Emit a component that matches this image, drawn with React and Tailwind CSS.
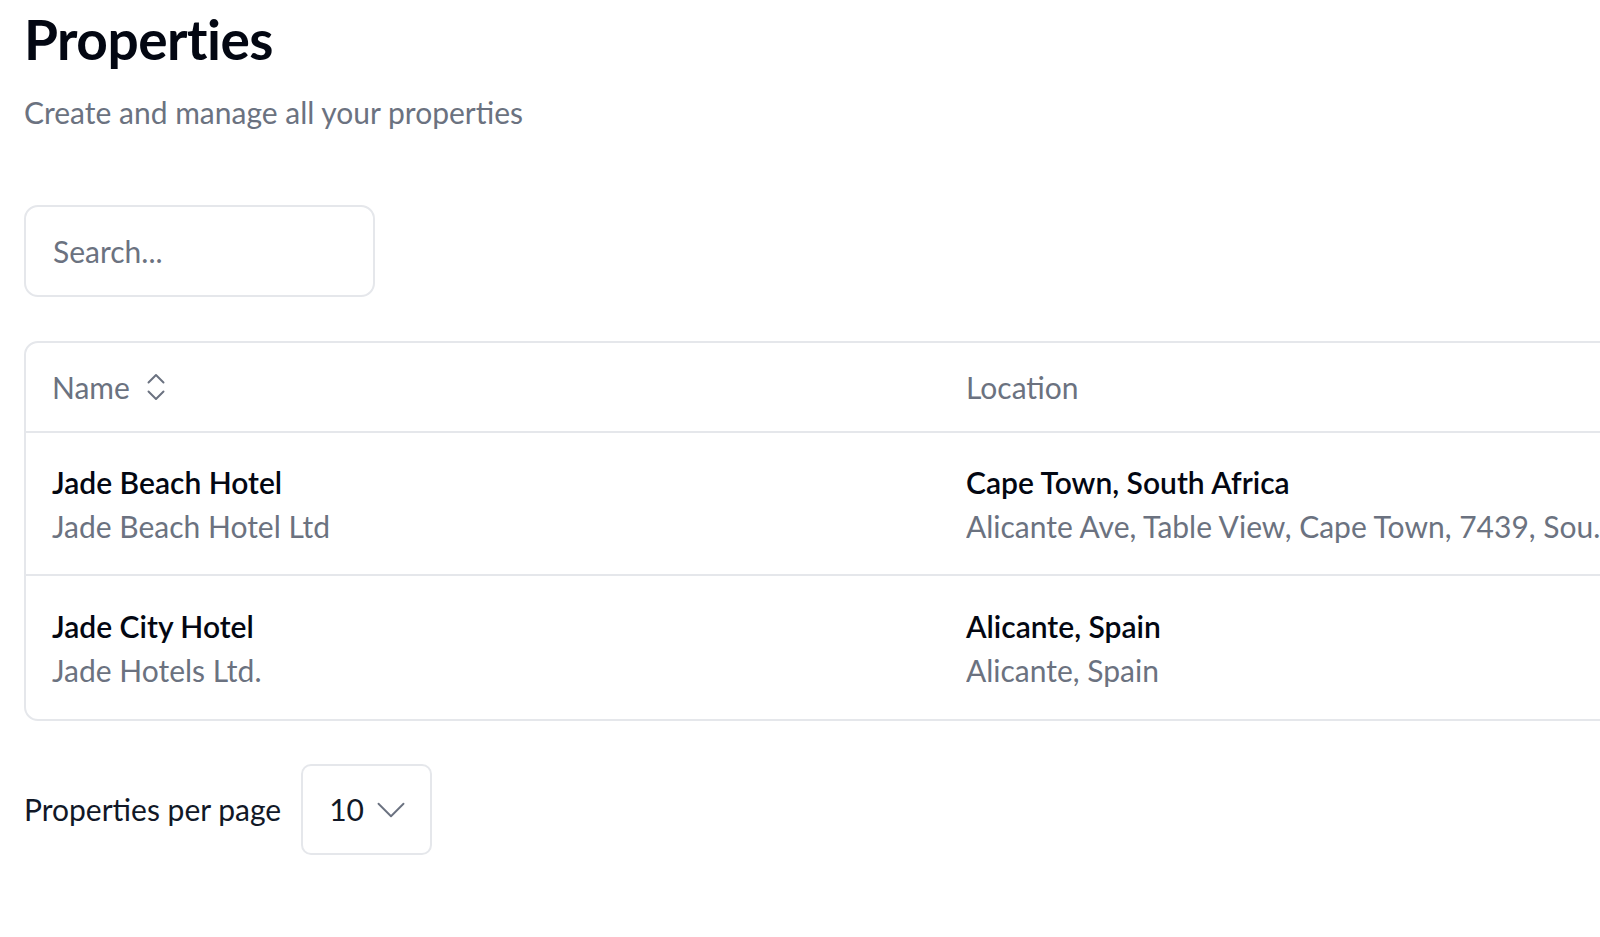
import { ChevronDown, ChevronsUpDown } from "lucide-react";

const rows = [
  {
    name: "Jade Beach Hotel",
    company: "Jade Beach Hotel Ltd",
    city: "Cape Town, South Africa",
    address: "Alicante Ave, Table View, Cape Town, 7439, South Africa",
  },
  {
    name: "Jade City Hotel",
    company: "Jade Hotels Ltd.",
    city: "Alicante, Spain",
    address: "Alicante, Spain",
  },
];

export default function App() {
  return (
    <div
      className="w-[1600px] h-[937px] overflow-hidden bg-white pl-6"
      style={{ fontFamily: "Lato, 'Noto Sans', sans-serif" }}
    >
      {/* Heading */}
      <h1 className="pt-[7px] text-[55px] leading-[64px] font-bold text-[#030712] tracking-[-0.5px]">
        Properties
      </h1>
      <p className="mt-[22px] text-[30px] leading-[38px] text-[#6b7280]">
        Create and manage all your properties
      </p>

      {/* Search */}
      <div className="mt-[74px] w-[351px] h-[92px] rounded-[14px] border-2 border-[#e5e7eb] flex items-center px-[27px]">
        <span className="text-[30px] text-[#6b7280]">Search...</span>
      </div>

      {/* Table */}
      <div className="mt-[44px] w-[2000px] rounded-[14px] border-2 border-[#e5e7eb]">
        <div className="flex h-[90px] items-center border-b-2 border-[#e5e7eb] text-[30px] text-[#6b7280]">
          <div className="w-[940px] pl-[26px] flex items-center gap-[8px]">
            Name
            <ChevronsUpDown className="w-[36px] h-[36px]" strokeWidth={1.3} />
          </div>
          <div className="flex-1">Location</div>
        </div>
        {rows.map((row, i) => (
          <div
            key={row.name}
            className={`flex h-[143px] items-center ${i < rows.length - 1 ? "border-b-2 border-[#e5e7eb]" : ""}`}
          >
            <div className="w-[940px] pl-[26px]">
              <div className="text-[30px] leading-[44px] font-semibold text-[#030712]">{row.name}</div>
              <div className="text-[30px] leading-[44px] text-[#6b7280]">{row.company}</div>
            </div>
            <div className="flex-1">
              <div className="text-[30px] leading-[44px] font-semibold text-[#030712]">{row.city}</div>
              <div className="max-w-[660px] truncate text-[30px] leading-[44px] text-[#6b7280]">
                {row.address}
              </div>
            </div>
          </div>
        ))}
      </div>

      {/* Per page */}
      <div className="mt-[43px] flex items-center gap-[20px]">
        <span className="text-[30px] text-[#111827]">Properties per page</span>
        <div className="w-[131px] h-[91px] rounded-[10px] border-2 border-[#e5e7eb] flex items-center pl-[26px] gap-[2px]">
          <span className="text-[30px] text-[#111827]">10</span>
          <ChevronDown className="w-[50px] h-[50px] text-[#6b7280]" strokeWidth={0.9} />
        </div>
      </div>
    </div>
  );
}
